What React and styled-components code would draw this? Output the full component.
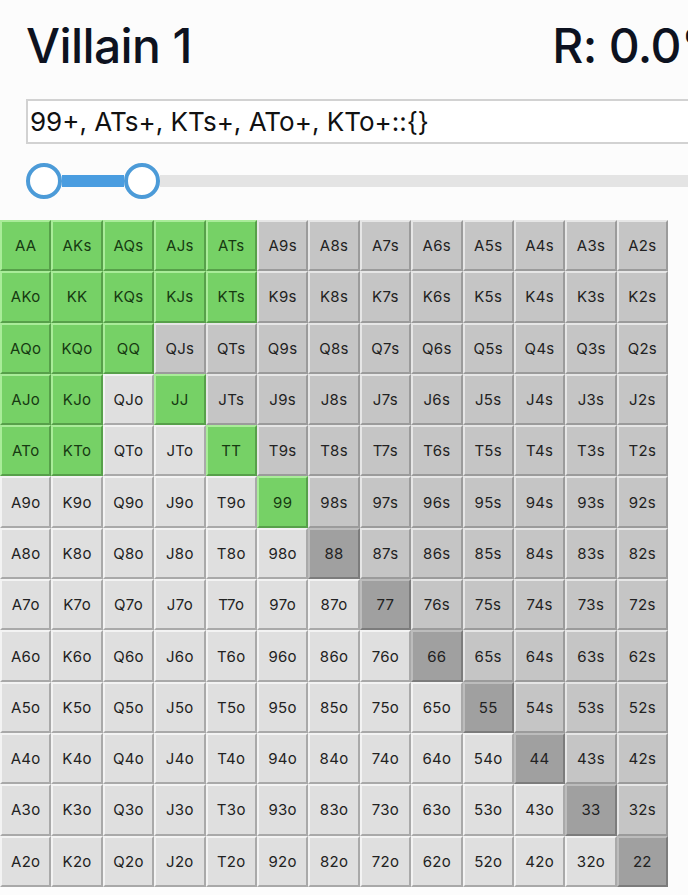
import React from 'react'
import styled, { createGlobalStyle } from 'styled-components'

const RANKS = ['A', 'K', 'Q', 'J', 'T', '9', '8', '7', '6', '5', '4', '3', '2']

const PALETTE = {
    selected: { bg: '#76d166', light: '#a9ec99', dark: '#57a04a', text: '#173a12' },
    pair: { bg: '#a0a0a0', light: '#bcbcbc', dark: '#7c7c7c', text: '#222' },
    suited: { bg: '#c5c5c5', light: '#e6e6e6', dark: '#9b9b9b', text: '#222' },
    offsuit: { bg: '#dfdfdf', light: '#f3f3f3', dark: '#a9a9a9', text: '#222' },
}

// 99+, ATs+, KTs+, ATo+, KTo+
function isSelected(row, col) {
    if (row === col) return row <= 5
    const hi = Math.min(row, col)
    const lo = Math.max(row, col)
    return hi <= 1 && lo <= 4
}

function handFor(row, col) {
    if (row === col) return { label: RANKS[row] + RANKS[col], kind: 'pair' }
    if (col > row) return { label: RANKS[row] + RANKS[col] + 's', kind: 'suited' }
    return { label: RANKS[col] + RANKS[row] + 'o', kind: 'offsuit' }
}

function RangeGrid() {
    const cells = []
    RANKS.forEach((_, row) => {
        RANKS.forEach((_, col) => {
            const { label, kind } = handFor(row, col)
            const tone = isSelected(row, col) ? 'selected' : kind
            cells.push(<Cell key={label} tone={tone}>{label}</Cell>)
        })
    })
    return <Grid>{cells}</Grid>
}

function RangeSlider() {
    return (
        <Slider>
            <Thumb />
            <Bar filled />
            <Thumb />
            <Bar />
        </Slider>
    )
}

function App() {
    return (
        <>
            <GlobalStyle />
            <Page>
                <Header>
                    <TitleRow>
                        <Title>Villain 1</Title>
                        <Title>R: 0.0%</Title>
                    </TitleRow>
                    <RangeInput defaultValue="99+, ATs+, KTs+, ATo+, KTo+::{}" />
                    <RangeSlider />
                </Header>
                <RangeGrid />
            </Page>
        </>
    )
}

export default App


const GlobalStyle = createGlobalStyle`
    html, body {
        margin: 0;
        padding: 0;
        background: #fcfcfc;
        overflow-x: hidden;
    }
    body {
        font-family: Inter, "Liberation Sans", sans-serif;
        color: #0d1220;
    }
`

const Page = styled.div`
    width: 754px;
    padding-top: 17px;
`

const Header = styled.div`
    display: flex;
    flex-direction: column;
    gap: 19px;
    padding: 0 26px 21px;
`

const TitleRow = styled.div`
    display: flex;
    justify-content: space-between;
    align-items: baseline;
    margin-bottom: 5px;
`

const Title = styled.h1`
    margin: 0;
    font-size: 48px;
    line-height: 58px;
    font-weight: 500;
    letter-spacing: -0.6px;
    color: #0d1220;
`

const RangeInput = styled.input`
    display: block;
    box-sizing: border-box;
    width: 100%;
    height: 45px;
    padding: 0 2px;
    border: 2px solid #d2d2d2;
    background: #fff;
    font-family: Inter, "Liberation Sans", sans-serif;
    font-size: 26px;
    color: #111;
    outline: none;
`

const Slider = styled.div`
    display: flex;
    align-items: center;
    height: 36px;
`

const Bar = styled.div`
    flex: ${p => (p.filled ? '0 0 62px' : '1')};
    height: 12px;
    background: ${p => (p.filled ? '#4a9de0' : '#e4e4e4')};
`

const Thumb = styled.div`
    flex: 0 0 36px;
    height: 36px;
    box-sizing: border-box;
    border-radius: 50%;
    border: 4px solid #4c9bd8;
    background: #fff;
`

const Grid = styled.div`
    display: grid;
    grid-template-columns: repeat(13, 51.4px);
    grid-auto-rows: 51.3px;
    width: 668px;
`

const Cell = styled.div`
    box-sizing: border-box;
    display: flex;
    align-items: center;
    justify-content: center;
    border: 2px solid;
    border-color: ${p => `${PALETTE[p.tone].light} ${PALETTE[p.tone].dark} ${PALETTE[p.tone].dark} ${PALETTE[p.tone].light}`};
    background: ${p => PALETTE[p.tone].bg};
    color: ${p => PALETTE[p.tone].text};
    font-size: 15px;
    letter-spacing: 0.3px;
`
